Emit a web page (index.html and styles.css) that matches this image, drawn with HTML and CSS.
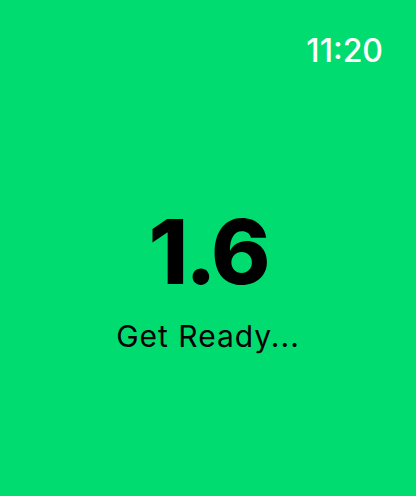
FILE: index.html
```html
<!DOCTYPE html>
<html lang="en">
<head>
    <meta charset="UTF-8">
    <meta name="viewport" content="width=device-width, initial-scale=1.0">
    <title>Get Ready</title>
    <link rel="stylesheet" href="styles.css">
</head>
<body>
    <div class="screen">
        <div class="status-bar">
            <span class="clock">11:20</span>
        </div>
        <div class="countdown">
            <div class="countdown-value">1.6</div>
            <div class="countdown-label">Get Ready...</div>
        </div>
    </div>
</body>
</html>
```

FILE: styles.css
```css
:root {
    --bg-color: #01dc70;
    --text-dark: #000000;
    --text-light: #ffffff;
}

* {
    margin: 0;
    padding: 0;
    box-sizing: border-box;
}

html, body {
    height: 100%;
}

body {
    font-family: Inter, 'Noto Sans', sans-serif;
    background-color: var(--bg-color);
    overflow: hidden;
}

.screen {
    height: 100%;
    display: flex;
    flex-direction: column;
}

.status-bar {
    display: flex;
    justify-content: flex-end;
    padding: 32px 33px 0 0;
}

.clock {
    color: var(--text-light);
    font-size: 32px;
    font-weight: 500;
    line-height: 38px;
}

.countdown {
    display: flex;
    flex-direction: column;
    align-items: center;
    padding-top: 132px;
}

.countdown-value {
    color: var(--text-dark);
    font-size: 90px;
    font-weight: 800;
    line-height: 100px;
    letter-spacing: -3px;
}

.countdown-label {
    color: var(--text-dark);
    font-size: 30px;
    font-weight: 400;
    line-height: 36px;
    letter-spacing: 1px;
    margin-top: 16px;
}
```
